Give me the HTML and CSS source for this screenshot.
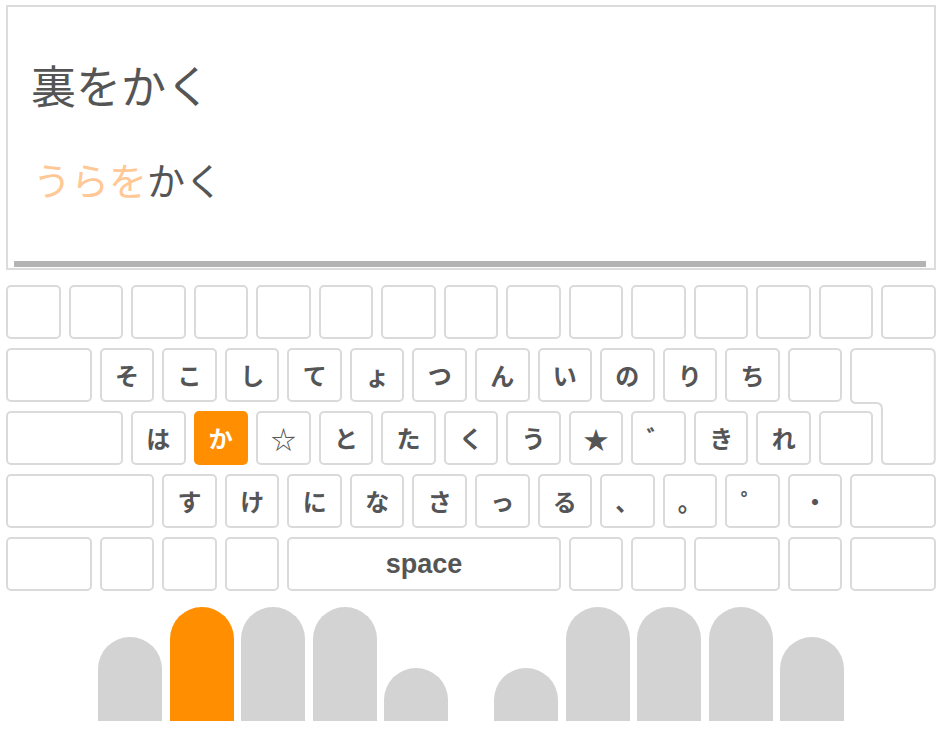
FILE: index.html
```html
<!DOCTYPE html>
<html lang="ja">
<head>
<meta charset="utf-8">
<title>タイピング</title>
<link rel="stylesheet" href="styles.css">
</head>
<body>
<div class="page">
  <div class="prompt">
    <div class="word">裏をかく</div>
    <div class="kana"><span class="done">うらを</span>かく</div>
    <div class="progress"></div>
  </div>

  <div class="keyboard">
    <!-- row 1 -->
    <div class="k r1"></div><div class="k r1"></div><div class="k r1"></div><div class="k r1"></div><div class="k r1"></div>
    <div class="k r1"></div><div class="k r1"></div><div class="k r1"></div><div class="k r1"></div><div class="k r1"></div>
    <div class="k r1"></div><div class="k r1"></div><div class="k r1"></div><div class="k r1"></div><div class="k r1"></div>
    <!-- row 2 -->
    <div class="k r2 w6"></div>
    <div class="k r2">そ</div><div class="k r2">こ</div><div class="k r2">し</div><div class="k r2">て</div>
    <div class="k r2">ょ</div><div class="k r2">つ</div><div class="k r2">ん</div><div class="k r2">い</div>
    <div class="k r2">の</div><div class="k r2">り</div><div class="k r2">ち</div><div class="k r2"></div>
    <div class="enter">
      <svg class="enter-shape" viewBox="0 0 86 117" preserveAspectRatio="none">
        <path d="M6 1H80Q85 1 85 6V111Q85 116 80 116H37Q32 116 32 111V61Q32 55 26 55H6Q1 55 1 50V6Q1 1 6 1Z" fill="#fff" stroke="#dadada" stroke-width="2"/>
      </svg>
    </div>
    <!-- row 3 -->
    <div class="k r3 w8"></div>
    <div class="k r3">は</div><div class="k r3 active">か</div><div class="k r3 sym">☆</div><div class="k r3">と</div>
    <div class="k r3">た</div><div class="k r3">く</div><div class="k r3">う</div><div class="k r3 sym">★</div>
    <div class="k r3">゛</div><div class="k r3">き</div><div class="k r3">れ</div><div class="k r3 last"></div>
    <!-- row 4 -->
    <div class="k r4 w10"></div>
    <div class="k r4">す</div><div class="k r4">け</div><div class="k r4">に</div><div class="k r4">な</div>
    <div class="k r4">さ</div><div class="k r4">っ</div><div class="k r4">る</div><div class="k r4">、</div>
    <div class="k r4">。</div><div class="k r4">゜</div><div class="k r4">・</div><div class="k r4 w6"></div>
    <!-- row 5 -->
    <div class="k r5 w6"></div><div class="k r5"></div><div class="k r5"></div><div class="k r5"></div>
    <div class="k r5 space">space</div>
    <div class="k r5"></div><div class="k r5"></div><div class="k r5 w6"></div><div class="k r5"></div><div class="k r5 w6"></div>
  </div>

  <div class="hands">
    <div class="hand">
      <div class="finger pinky"></div>
      <div class="finger long on"></div>
      <div class="finger long"></div>
      <div class="finger long"></div>
      <div class="finger thumb"></div>
    </div>
    <div class="hand">
      <div class="finger thumb"></div>
      <div class="finger long"></div>
      <div class="finger long"></div>
      <div class="finger long"></div>
      <div class="finger pinky"></div>
    </div>
  </div>
</div>
</body>
</html>
```

FILE: styles.css
```css
* { box-sizing: border-box; }

html, body {
  margin: 0;
  padding: 0;
  background: #fff;
}

body {
  font-family: "Noto Sans CJK JP", "Noto Sans", sans-serif;
  color: #555;
}

.page {
  padding: 5px 0 0 6px;
  width: 952px;
}

/* ---------- prompt box ---------- */
.prompt {
  width: 930px;
  height: 265px;
  border: 2px solid #dcdcdc;
  display: flex;
  flex-direction: column;
  padding-top: 55px;
}

.word {
  font-size: 45px;
  line-height: 45px;
  padding-left: 23px;
  color: #555;
}

.kana {
  margin-top: 53px;
  font-size: 38px;
  line-height: 38px;
  padding-left: 25px;
  color: #555;
}

.done { color: #ffc896; }

.progress {
  margin: auto 8px 1px 6px;
  height: 6px;
  background: #b4b4b4;
}

/* ---------- keyboard ---------- */
.keyboard {
  margin-top: 15px;
  width: 938px;
  display: grid;
  grid-template-columns: repeat(60, 1fr);
  grid-auto-rows: 54px;
  row-gap: 9px;
}

.k {
  grid-column-end: span 4;
  margin-right: 8px;
  border: 2px solid #dadada;
  border-radius: 5px;
  display: flex;
  align-items: center;
  justify-content: center;
  font-size: 24px;
  font-weight: 700;
  color: #555;
  line-height: 1;
  background: #fff;
}

.r1 { grid-row: 1; }
.r2 { grid-row: 2; }
.r3 { grid-row: 3; }
.r4 { grid-row: 4; }
.r5 { grid-row: 5; }

.w6 { grid-column-end: span 6; }
.w8 { grid-column-end: span 8; }
.w10 { grid-column-end: span 10; }
.space {
  grid-column-end: span 18;
  font-family: "Liberation Sans", Arial, sans-serif;
  font-size: 27px;
  padding-top: 1px;
}

.k.last { grid-column: 53 / span 4; }

.sym { font-weight: 400; font-size: 25px; }

.k.active {
  background: #ff8f00;
  border-color: #ff8f00;
  color: #fff;
}

.enter {
  grid-row: 2 / span 2;
  grid-column: 55 / span 6;
  margin-right: 8px;
}

.enter-shape {
  display: block;
  width: 100%;
  height: 100%;
}

/* ---------- hands ---------- */
.hands {
  margin-top: 16px;
  width: 930px;
  display: flex;
  justify-content: center;
  gap: 46px;
}

.hand {
  display: flex;
  align-items: flex-end;
  gap: 7.5px;
}

.finger {
  width: 64px;
  background: #d3d3d3;
  border-radius: 32px 32px 0 0;
}

.finger.long { height: 114px; }
.finger.pinky { height: 84px; }
.finger.thumb { height: 53px; }
.finger.on { background: #ff8f00; }
```
